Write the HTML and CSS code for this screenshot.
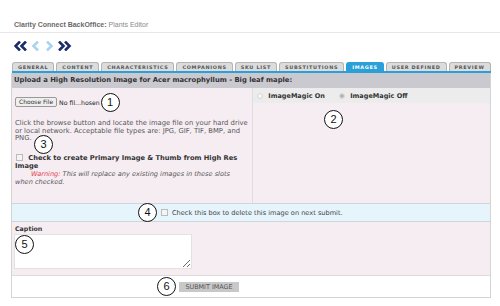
FILE: index.html
```html
<!DOCTYPE html>
<html lang="en">
<head>
    <meta charset="UTF-8">
    <title>Clarity Connect BackOffice: Plants Editor</title>
    <link rel="stylesheet" href="styles.css">
</head>
<body>
    <div class="page">
        <div class="title"><span class="app">Clarity Connect BackOffice:</span> Plants Editor</div>

        <div class="pager">
            <svg width="60" height="10" viewBox="0 0 60 10">
                <g fill="none" stroke-width="2.6" stroke-linejoin="miter">
                    <polyline points="6,0.5 1.5,5 6,9.5" stroke="#1b2c6b"/>
                    <polyline points="12,0.5 7.5,5 12,9.5" stroke="#1b2c6b"/>
                    <polyline points="24,0.5 19.5,5 24,9.5" stroke="#a9d4ee"/>
                    <polyline points="33,0.5 37.5,5 33,9.5" stroke="#a9d4ee"/>
                    <polyline points="45,0.5 49.5,5 45,9.5" stroke="#1b2c6b"/>
                    <polyline points="51,0.5 55.5,5 51,9.5" stroke="#1b2c6b"/>
                </g>
            </svg>
        </div>

        <ul class="tabs">
            <li class="tab">General</li>
            <li class="tab">Content</li>
            <li class="tab">Characteristics</li>
            <li class="tab">Companions</li>
            <li class="tab">SKU List</li>
            <li class="tab">Substitutions</li>
            <li class="tab active">Images</li>
            <li class="tab">User Defined</li>
            <li class="tab">Preview</li>
        </ul>

        <div class="panel">
            <div class="panel-head">Upload a High Resolution Image for Acer macrophyllum - Big leaf maple:</div>

            <div class="upload">
                <div class="col-left">
                    <div class="file-row">
                        <button class="file-btn">Choose File</button>
                        <span class="file-name">No fil...hosen</span>
                        <span class="callout">1</span>
                    </div>
                    <p class="hint">Click the browse button and locate the image file on your hard drive or local network. Acceptable file types are: JPG, GIF, TIF, BMP, and PNG.</p>
                    <label class="primary"><input type="checkbox" class="box"> Check to create Primary Image &amp; Thumb from High Res Image</label>
                    <p class="warn"><em class="red">Warning:</em> This will replace any existing images in these slots when checked.</p>
                    <span class="callout c3">3</span>
                </div>
                <div class="col-right">
                    <div class="radios">
                        <label><input type="radio" name="im" class="dot"> ImageMagic On</label>
                        <label><input type="radio" name="im" class="dot" checked> ImageMagic Off</label>
                    </div>
                    <span class="callout c2">2</span>
                </div>
            </div>

            <div class="delete-row">
                <span class="callout">4</span>
                <input type="checkbox" class="box">
                <span>Check this box to delete this image on next submit.</span>
            </div>

            <div class="caption">
                <div class="label">Caption</div>
                <textarea class="caption-text"></textarea>
                <span class="callout c5">5</span>
            </div>

            <div class="submit-row">
                <span class="callout">6</span>
                <button class="submit">SUBMIT IMAGE</button>
            </div>
        </div>
    </div>
</body>
</html>
```

FILE: styles.css
```css
body {
    margin: 0;
    background: #fff;
    font-family: "DejaVu Sans", Verdana, sans-serif;
    color: #444;
}
.page {
    padding-top: 20px;
}
.title {
    font: 7px/9px "Liberation Sans", Arial, sans-serif;
    color: #8a8a8a;
    padding: 0 0 3px 14px;
    border-bottom: 1px solid #e8e8e8;
}
.title .app {
    color: #6a6a6a;
    font-weight: bold;
}
.pager {
    padding: 8px 0 0 14px;
    height: 10px;
}
.pager svg {
    display: block;
}
.tabs {
    list-style: none;
    margin: 11px 9px 0 12px;
    padding: 0;
    display: flex;
    gap: 2px;
    border-bottom: 2px solid #2a9fd8;
}
.tab {
    flex-shrink: 0;
    white-space: nowrap;
    height: 8px;
    line-height: 9px;
    padding: 0 5px;
    background: #dcdcdc;
    border: 1px solid #b4b4b4;
    border-bottom: none;
    border-radius: 3px 3px 0 0;
    font-size: 4.9px;
    font-weight: bold;
    letter-spacing: 0.7px;
    text-transform: uppercase;
    color: #555;
}
.tab.active {
    background: #2a9fd8;
    border-color: #2a9fd8;
    color: #fff;
}
.panel {
    margin: 0 9px 0 11px;
    border: 1px solid #d4d4d4;
    border-top: none;
}
.panel-head {
    height: 15px;
    line-height: 15px;
    padding-left: 2px;
    background: #c9c9cf;
    font-size: 6.8px;
    font-weight: bold;
    color: #333;
    white-space: nowrap;
}
.upload {
    display: grid;
    grid-template-columns: 240px 1fr;
    height: 115px;
    background: #f6edf3;
}
.col-left {
    position: relative;
    padding: 9px 3px 0 3px;
}
.col-right {
    position: relative;
    border-left: 1px solid #dedede;
}
.file-row {
    display: flex;
    align-items: center;
    height: 10px;
    gap: 2px;
    font-size: 6.2px;
}
.file-btn {
    height: 10px;
    padding: 0 3px;
    font: 6px/8px "DejaVu Sans", sans-serif;
    color: #333;
    background: #efefef;
    border: 1px solid #999;
    border-radius: 2px;
}
.file-name {
    color: #222;
    margin-right: -1px;
}
.hint {
    margin: 13px 0 0;
    font-size: 6.8px;
    line-height: 7.5px;
    color: #555;
}
.primary {
    display: block;
    margin-top: 11px;
    font-size: 6.7px;
    line-height: 8.3px;
    font-weight: bold;
    color: #333;
}
.warn {
    margin: 0;
    font-size: 6.6px;
    line-height: 8px;
    font-style: italic;
    color: #555;
    text-indent: 16px;
}
.red {
    color: #e0424c;
}
.box {
    appearance: none;
    width: 7px;
    height: 7px;
    margin: 0 3px 0 1px;
    vertical-align: -1px;
    background: #f4f4f4;
    border: 1px solid #bbb;
}
.radios {
    display: flex;
    align-items: center;
    gap: 14px;
    height: 15px;
    padding-left: 4px;
    background: #ececec;
    font-size: 6.5px;
    font-weight: bold;
    color: #333;
}
.dot {
    appearance: none;
    width: 6px;
    height: 6px;
    margin: 0 3px 0 0;
    vertical-align: -1px;
    border: 1px solid #d6d6d6;
    border-radius: 50%;
    background: #f7f7f7;
}
.dot:checked {
    background: radial-gradient(circle, #b0b0b0 1.5px, #f2f2f2 2px);
}
.delete-row {
    display: flex;
    align-items: center;
    gap: 4px;
    height: 17px;
    padding-left: 126px;
    background: #e6f4fc;
    border-top: 1px solid #cfd6db;
    border-bottom: 1px solid #cfd6db;
    font-size: 6.6px;
    color: #444;
}
.delete-row .box {
    margin: 0;
}
.caption {
    position: relative;
    height: 47px;
    padding: 3px 2px;
    background: #f6edf3;
}
.label {
    font-size: 6.3px;
    line-height: 7px;
    font-weight: bold;
    color: #333;
    padding-left: 1px;
}
.caption-text {
    display: block;
    box-sizing: border-box;
    width: 178px;
    height: 35px;
    margin-top: 2px;
    border: 1px solid #e2e2e2;
    background: #fff;
}
.submit-row {
    display: flex;
    align-items: center;
    gap: 3px;
    height: 21px;
    padding-left: 145px;
    border-top: 1px solid #dcdcdc;
    background: #fff;
}
.submit {
    height: 10px;
    width: 60px;
    padding: 0;
    border: none;
    background: #c8c8c8;
    font: 6.4px/10px "DejaVu Sans", sans-serif;
    color: #555;
}
.callout {
    box-sizing: border-box;
    display: inline-block;
    width: 19px;
    height: 19px;
    border: 1.4px solid #111;
    border-radius: 50%;
    background: #fff;
    font: 11px/16.5px "Liberation Sans", Arial, sans-serif;
    text-align: center;
    color: #111;
}
.c3 {
    position: absolute;
    left: 22px;
    top: 47px;
}
.c2 {
    position: absolute;
    left: 71px;
    top: 22px;
}
.c5 {
    position: absolute;
    left: 3px;
    top: 13px;
}
```
